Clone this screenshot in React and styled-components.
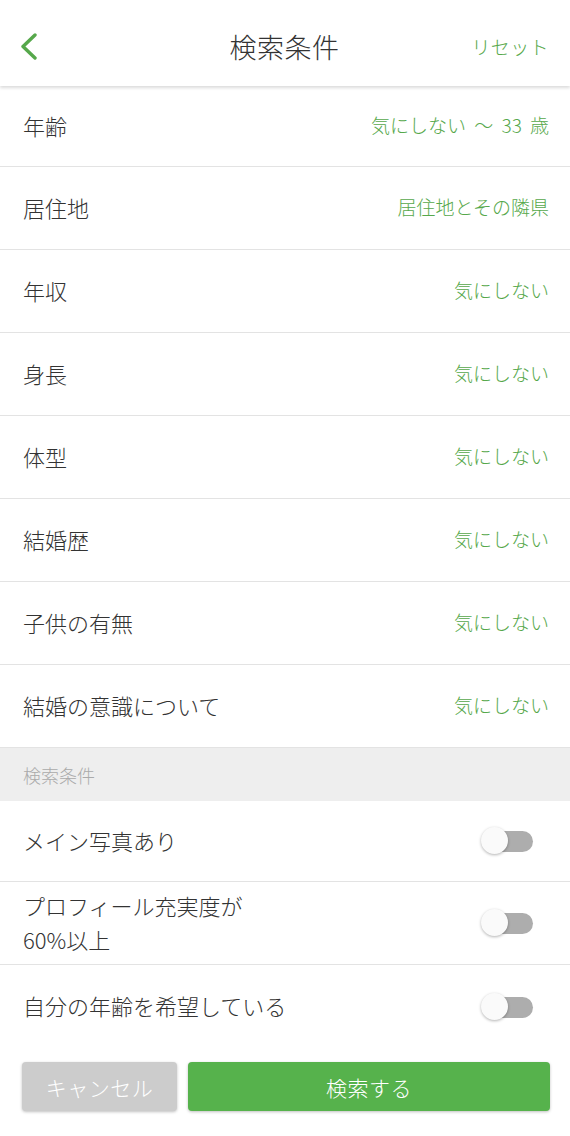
import styled, { createGlobalStyle } from "styled-components";

const GlobalStyle = createGlobalStyle`
  html, body {
    margin: 0;
    padding: 0;
    background: #fff;
  }
  body {
    font-family: "Noto Sans CJK JP", "Noto Sans", sans-serif;
    font-weight: 300;
    -webkit-font-smoothing: antialiased;
  }
`;

const GREEN = "#56a84b";

const conditions = [
  { label: "年齢", value: "気にしない ～ 33 歳" },
  { label: "居住地", value: "居住地とその隣県" },
  { label: "年収", value: "気にしない" },
  { label: "身長", value: "気にしない" },
  { label: "体型", value: "気にしない" },
  { label: "結婚歴", value: "気にしない" },
  { label: "子供の有無", value: "気にしない" },
  { label: "結婚の意識について", value: "気にしない" },
];

const toggles = [
  { label: "メイン写真あり", height: 81 },
  { label: "プロフィール充実度が\n60%以上", height: 83 },
  { label: "自分の年齢を希望している", height: 83 },
];

const App = () => {
  return (
    <Page>
      <GlobalStyle />
      <Header>
        <BackButton aria-label="戻る">
          <svg width="18" height="28" viewBox="0 0 18 28">
            <path
              d="M15 2 L3 13.5 L15 25"
              fill="none"
              stroke={GREEN}
              strokeWidth="3.4"
              strokeLinecap="round"
              strokeLinejoin="round"
            />
          </svg>
        </BackButton>
        <Title>検索条件</Title>
        <Reset>リセット</Reset>
      </Header>

      <List>
        {conditions.map((c) => (
          <Row key={c.label}>
            <Label>{c.label}</Label>
            <Value>{c.value}</Value>
          </Row>
        ))}
      </List>

      <SectionHeader>検索条件</SectionHeader>

      <List>
        {toggles.map((t, i) => (
          <ToggleRow key={i} $height={t.height} $last={i === toggles.length - 1}>
            <Label>{t.label}</Label>
            <Switch>
              <Track />
              <Knob />
            </Switch>
          </ToggleRow>
        ))}
      </List>

      <Footer>
        <Button $variant="cancel">キャンセル</Button>
        <Button $variant="primary">検索する</Button>
      </Footer>
    </Page>
  );
};

const Page = styled.div`
  width: 570px;
  min-height: 1136px;
  background: #fff;
  color: #333;
`;

const Header = styled.header`
  position: relative;
  z-index: 1;
  height: 86px;
  display: grid;
  grid-template-columns: 120px 1fr 120px;
  align-items: center;
  padding: 6px 21px 0 20px;
  box-sizing: border-box;
  background: #fff;
  box-shadow: 0 2px 3px rgba(0, 0, 0, 0.14);
`;

const BackButton = styled.div`
  display: flex;
  align-items: center;
  height: 30px;
  margin-top: 2px;
`;

const Title = styled.h1`
  margin: 0;
  text-align: center;
  font-size: 27px;
  font-weight: 300;
  color: #333;
  letter-spacing: 0.5px;
`;

const Reset = styled.div`
  text-align: right;
  font-size: 19px;
  color: ${GREEN};
  letter-spacing: 0.4px;
`;

const List = styled.div`
  display: flex;
  flex-direction: column;
`;

const Row = styled.div`
  height: 83px;
  box-sizing: border-box;
  display: flex;
  align-items: center;
  justify-content: space-between;
  padding: 0 21px 0 23px;
  border-bottom: 1px solid #e3e3e3;
  &:first-child {
    height: 81px;
  }
`;

const Label = styled.div`
  font-size: 22px;
  line-height: 34px;
  color: #333;
  white-space: pre-line;
  margin-top: -3px;
`;

const Value = styled.div`
  font-size: 19px;
  color: ${GREEN};
  word-spacing: 4px;
  margin-top: -3px;
`;

const SectionHeader = styled.div`
  height: 53px;
  display: flex;
  align-items: center;
  padding-left: 23px;
  background: #eeeeee;
  font-size: 18px;
  color: #aaa;
`;

const ToggleRow = styled.div`
  height: ${({ $height }) => $height}px;
  box-sizing: border-box;
  display: flex;
  align-items: center;
  justify-content: space-between;
  padding: 0 37px 0 23px;
  border-bottom: ${({ $last }) => ($last ? "none" : "1px solid #e3e3e3")};
`;

const Switch = styled.div`
  position: relative;
  width: 52px;
  height: 28px;
  flex-shrink: 0;
`;

const Track = styled.div`
  position: absolute;
  right: 0;
  top: 4px;
  width: 44px;
  height: 21px;
  border-radius: 11px;
  background: #adadad;
`;

const Knob = styled.div`
  position: absolute;
  left: 0;
  top: 0;
  width: 27px;
  height: 27px;
  border-radius: 50%;
  background: #fafafa;
  box-shadow: 0 1px 3px rgba(0, 0, 0, 0.3);
`;

const Footer = styled.div`
  display: grid;
  grid-template-columns: 155px 1fr;
  gap: 11px;
  padding: 14px 20px 0 22px;
`;

const Button = styled.button`
  height: 49px;
  border: none;
  border-radius: 4px;
  font-family: inherit;
  font-weight: 300;
  font-size: 21px;
  color: #fff;
  letter-spacing: 0.5px;
  background: ${({ $variant }) => ($variant === "primary" ? "#56b24c" : "#cccccc")};
  box-shadow: 0 1px 3px rgba(0, 0, 0, 0.25);
`;

export default App;
